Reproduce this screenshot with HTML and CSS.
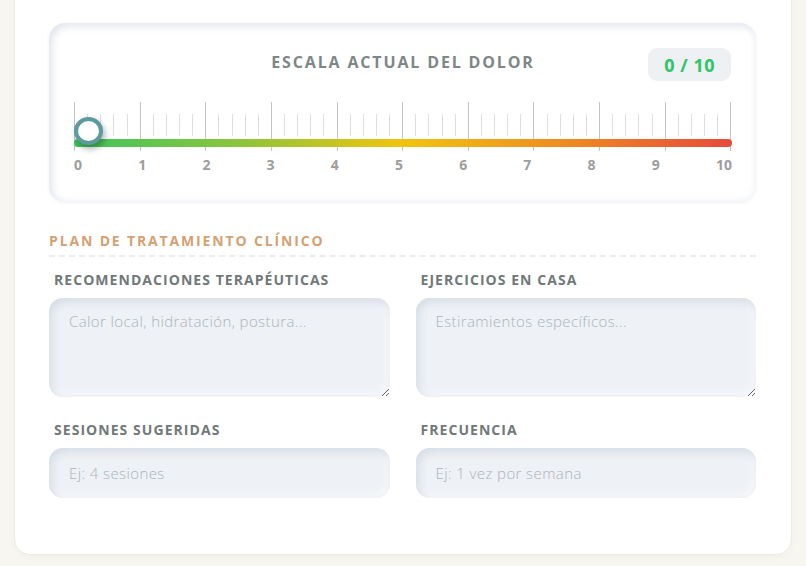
FILE: index.html
```html
<!DOCTYPE html>
<html lang="es">
<head>
<meta charset="utf-8">
<title>Plan de tratamiento</title>
<link rel="stylesheet" href="styles.css">
</head>
<body>
<main class="sheet">
  <section class="pain-card">
    <div class="pain-head">
      <span></span>
      <h2 class="pain-title">ESCALA ACTUAL DEL DOLOR</h2>
      <span class="pain-badge">0 / 10</span>
    </div>
    <div class="ruler">
      <div class="ticks">
        <i class="tick major"></i><i class="tick"></i><i class="tick"></i><i class="tick"></i><i class="tick"></i>
        <i class="tick major"></i><i class="tick"></i><i class="tick"></i><i class="tick"></i><i class="tick"></i>
        <i class="tick major"></i><i class="tick"></i><i class="tick"></i><i class="tick"></i><i class="tick"></i>
        <i class="tick major"></i><i class="tick"></i><i class="tick"></i><i class="tick"></i><i class="tick"></i>
        <i class="tick major"></i><i class="tick"></i><i class="tick"></i><i class="tick"></i><i class="tick"></i>
        <i class="tick major"></i><i class="tick"></i><i class="tick"></i><i class="tick"></i><i class="tick"></i>
        <i class="tick major"></i><i class="tick"></i><i class="tick"></i><i class="tick"></i><i class="tick"></i>
        <i class="tick major"></i><i class="tick"></i><i class="tick"></i><i class="tick"></i><i class="tick"></i>
        <i class="tick major"></i><i class="tick"></i><i class="tick"></i><i class="tick"></i><i class="tick"></i>
        <i class="tick major"></i><i class="tick"></i><i class="tick"></i><i class="tick"></i><i class="tick"></i>
        <i class="tick major"></i>
      </div>
      <div class="track"></div>
      <div class="thumb"></div>
    </div>
    <div class="scale-labels">
      <span>0</span><span>1</span><span>2</span><span>3</span><span>4</span><span>5</span><span>6</span><span>7</span><span>8</span><span>9</span><span>10</span>
    </div>
  </section>

  <h3 class="section-title">PLAN DE TRATAMIENTO CLÍNICO</h3>

  <div class="form-grid">
    <label class="field">
      <span class="field-label">RECOMENDACIONES TERAPÉUTICAS</span>
      <textarea class="control area" placeholder="Calor local, hidratación, postura..."></textarea>
    </label>
    <label class="field">
      <span class="field-label">EJERCICIOS EN CASA</span>
      <textarea class="control area" placeholder="Estiramientos específicos..."></textarea>
    </label>
    <label class="field">
      <span class="field-label">SESIONES SUGERIDAS</span>
      <input class="control line" type="text" placeholder="Ej: 4 sesiones">
    </label>
    <label class="field">
      <span class="field-label">FRECUENCIA</span>
      <input class="control line" type="text" placeholder="Ej: 1 vez por semana">
    </label>
  </div>
</main>
</body>
</html>
```
FILE: styles.css
```css
* { box-sizing: border-box; }
html, body { margin: 0; padding: 0; }
body {
  background: #f7f6f1;
  font-family: "Open Sans", "Liberation Sans", sans-serif;
  height: 566px;
  overflow: hidden;
}
.sheet {
  margin: -20px 14px 0;
  padding: 42px 35px 56px 34px;
  background: #fff;
  border: 1px solid #ecebe5;
  border-radius: 16px;
  box-shadow: 0 2px 8px rgba(0,0,0,0.03);
}
.pain-card {
  height: 179px;
  border-radius: 16px;
  background: #fff;
  padding: 25px 24px 0 25px;
  box-shadow: inset 3px 3px 8px #dfe3ec, inset -3px -3px 8px #fafbfc, 0 1px 3px rgba(200,205,215,0.25);
}
.pain-head {
  display: grid;
  grid-template-columns: 1fr auto 1fr;
  align-items: center;
  height: 33px;
}
.pain-title {
  margin: 0;
  font-size: 16px;
  font-weight: 700;
  letter-spacing: 1.85px;
  color: #7d8787;
  line-height: 20px;
  position: relative;
  top: -3px;
}
.pain-badge {
  justify-self: end;
  margin-right: 1px;
  background: #eef1f4;
  border-radius: 9px;
  height: 33px;
  padding: 0 16px;
  display: flex;
  align-items: center;
  font-size: 18px;
  font-weight: 700;
  color: #2fc467;
  letter-spacing: 0.5px;
}
.ruler {
  position: relative;
  margin-top: 21px;
  height: 49px;
}
.ticks {
  display: flex;
  justify-content: space-between;
  align-items: flex-start;
  height: 49px;
}
.tick {
  display: block;
  width: 1px;
  height: 22px;
  margin-top: 12px;
  background: #dedede;
}
.tick.major {
  height: 49px;
  margin-top: 0;
  background: #c4c4c4;
}
.track {
  position: absolute;
  left: 0;
  right: 0;
  top: 37px;
  height: 8px;
  border-radius: 4px;
  background: linear-gradient(90deg, #3cc65e 0%, #8cc43c 25%, #f1c40f 50%, #ee8a22 75%, #e64a3b 100%);
}
.thumb {
  position: absolute;
  left: 0;
  top: 15px;
  width: 29px;
  height: 28px;
  border-radius: 50%;
  background: #fff;
  border: 4px solid #5b9b9d;
  box-shadow: 2px 4px 6px rgba(0,0,0,0.3);
}
.scale-labels {
  display: flex;
  justify-content: space-between;
  margin-top: 5px;
  font-size: 14px;
  font-weight: 700;
  color: #9d9d9d;
  line-height: 18px;
}
.section-title {
  margin: 31px 0 0;
  font-size: 14px;
  font-weight: 700;
  letter-spacing: 1.85px;
  color: #d3a172;
  line-height: 16px;
  padding-bottom: 6px;
  border-bottom: 2px dashed #ececec;
}
.form-grid {
  display: grid;
  grid-template-columns: 1fr 1fr;
  column-gap: 26px;
  row-gap: 25px;
  margin-top: 15px;
}
.field {
  display: flex;
  flex-direction: column;
}
.field-label {
  padding-left: 5px;
  font-size: 14px;
  font-weight: 700;
  color: #707979;
  line-height: 16px;
  margin-bottom: 10px;
  letter-spacing: 1.05px;
}
.control {
  border: none;
  outline: none;
  background: #eef1f5;
  border-radius: 14px;
  box-shadow: inset 3px 4px 8px #d6dce6, inset -3px -3px 8px #f8f9fb;
  font-family: "Open Sans", "Liberation Sans", sans-serif;
  font-size: 15px;
  font-weight: 300;
  letter-spacing: 0.4px;
  color: #555;
  padding: 13px 20px;
  width: 100%;
}
.control::placeholder { color: #abb3ba; }
.area {
  height: 99px;
  resize: vertical;
}
.line {
  height: 50px;
  padding: 0 20px;
}
```
